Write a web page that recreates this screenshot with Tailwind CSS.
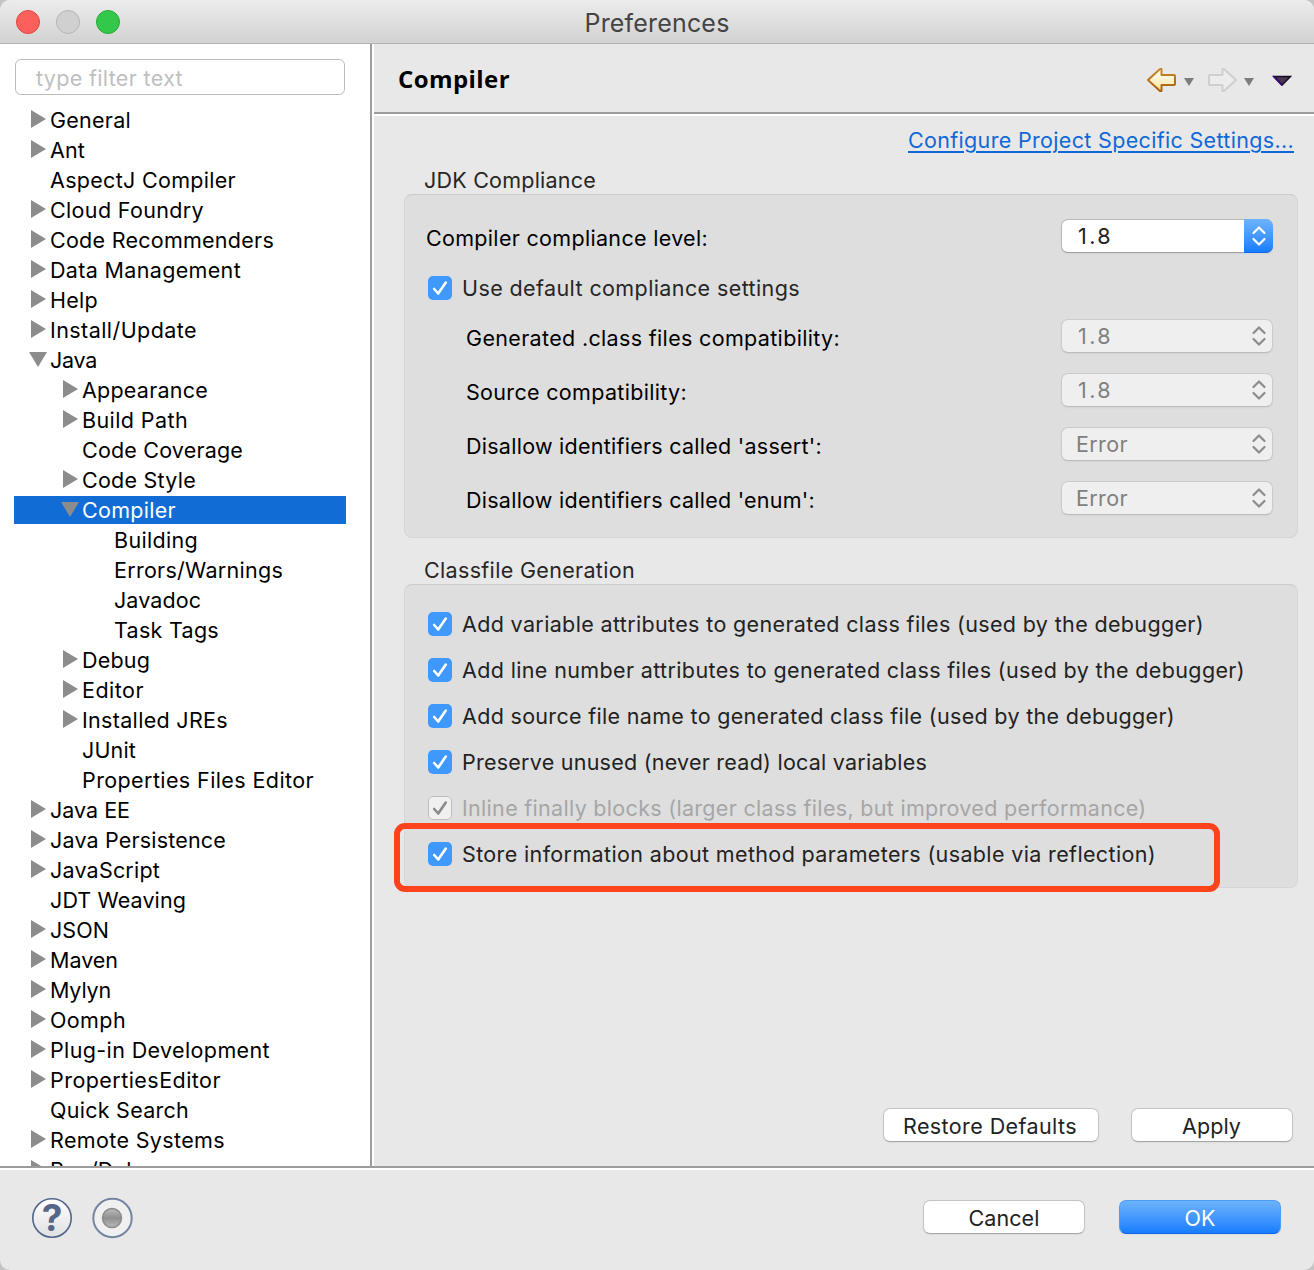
<!DOCTYPE html>
<html lang="en">
<head>
<meta charset="utf-8">
<title>Preferences</title>
<script src="https://cdn.jsdelivr.net/npm/@tailwindcss/browser@4"></script>
</head>
<body class="bg-[#c4c4c4]">
<div class="flex h-[1270px] w-[1314px] flex-col overflow-hidden rounded-[10px] bg-[#e8e8e8] font-['Inter',sans-serif] text-[21.5px] leading-[30px] whitespace-nowrap text-black">

  <!-- Title bar -->
  <header class="relative flex h-11 shrink-0 items-center justify-center border-b border-[#b1b1b1] bg-linear-to-b from-[#ececec] to-[#d2d2d2]">
    <div class="absolute top-[10px] left-4 flex gap-4">
      <span class="size-6 rounded-full border border-[#e2463f] bg-[#fc605c]"></span>
      <span class="size-6 rounded-full border border-[#b4b4b4] bg-[#d0d0d0]"></span>
      <span class="size-6 rounded-full border border-[#27aa35] bg-[#34c84a]"></span>
    </div>
    <h1 class="pt-[3px] text-[25px] text-[#444]"><span data-w="145" data-font="25px Inter">Preferences</span></h1>
  </header>

  <main class="flex h-[1122px] shrink-0">
    <!-- Category tree -->
    <nav class="flex w-[370px] shrink-0 flex-col overflow-hidden bg-white pt-[15px]">
      <div class="ml-[15px] flex h-9 w-[330px] shrink-0 items-center rounded-md border-[1.5px] border-[#bcbcbc] pt-0.5 pl-5 text-[#bfbfbf]"><span data-w="147">type filter text</span></div>
      <ul id="tree" class="mt-[11px] flex h-[1060px] shrink-0 flex-col gap-0.5 overflow-hidden"></ul>
    </nav>
    <div class="w-1 shrink-0 border-r-2 border-l-2 border-r-white border-l-[#9c9c9c]"></div>

    <section class="flex w-[940px] flex-col">
      <div class="flex h-[68px] shrink-0 items-center justify-between pt-1 pr-[22px] pl-6">
        <h2 class="pb-0.5 font-['Open_Sans','Noto_Sans',sans-serif] text-[24px] font-bold"><span data-w="112" data-font="bold 24px 'Open Sans'">Compiler</span></h2>
        <svg class="h-[26px] w-[146px]" viewBox="1146 67 146 26">
          <defs>
            <linearGradient id="gold" x1="0" y1="0" x2="0" y2="1"><stop offset="0" stop-color="#fff"/><stop offset="1" stop-color="#fde79a"/></linearGradient>
            <linearGradient id="edge" x1="0" y1="0" x2="0" y2="1"><stop offset="0" stop-color="#c48a2a"/><stop offset="1" stop-color="#a9600f"/></linearGradient>
          </defs>
          <path d="M1148 80 1160 69h1.500v6H1174q1 0 1 1v8q0 1-1 1h-12.500v6h-1.500z" fill="url(#gold)" stroke="url(#edge)" stroke-width="2" stroke-linejoin="round"/>
          <path d="M1184 78h10l-5 8z" fill="#7d7d7d"/>
          <path d="M1236 80 1224 69h-1.500v6H1210q-1 0-1 1v8q0 1 1 1h12.500v6h1.500z" fill="#ececec" stroke="#cfcfcf" stroke-width="2" stroke-linejoin="round"/>
          <path d="M1244 78h10l-5 8z" fill="#7d7d7d"/>
          <path d="M1274 76.500h16.500l-8.300 8.500z" fill="#4b3552" stroke="#150a22" stroke-width="1.500"/>
          <path d="M1273 76 1282 85.500" stroke="#3b0a8c" stroke-width="1.500"/>
        </svg>
      </div>
      <div class="h-1 shrink-0 border-t-2 border-b-2 border-t-[#9c9c9c] border-b-white"></div>

      <a class="mt-[9px] mr-5 self-end text-[#0f68d8] underline decoration-2 underline-offset-[3px]" href="#"><span data-w="386">Configure Project Specific Settings...</span></a>

      <h3 class="mt-[10px] ml-[50px] text-[#262626]"><span data-w="172">JDK Compliance</span></h3>
      <div class="mt-[-1px] ml-[30px] h-[344px] w-[894px] rounded-lg border border-[#d6d6d6] border-t-[#cbcbcb] bg-[#dedede] pt-6 pr-6 pl-[21px]">
        <div class="flex h-[34px] items-center justify-between">
          <label class="pt-1"><span data-w="282">Compiler compliance level:</span></label>
          <div class="flex h-[34px] w-[212px] items-center justify-between rounded-[7px] border border-[#b9b9b9] border-b-[#9f9f9f] bg-white pl-4 text-[#222] shadow-xs">
            <span data-w="35">1.8</span>
            <span class="-my-px -mr-px flex h-[34px] w-[29px] shrink-0 items-center justify-center rounded-r-[7px] border-b border-[#1566ee] bg-linear-to-b from-[#6cb3fa] to-[#147dff]">
              <svg class="h-[22px] w-4" viewBox="0 0 16 22" fill="none" stroke="#fff" stroke-width="2.200" stroke-linecap="round" stroke-linejoin="round"><path d="M2.500 8 8 2.500 13.500 8M2.500 14 8 19.500 13.500 14"/></svg>
            </span>
          </div>
        </div>
        <div class="mt-[23px] ml-0.5 flex h-6 items-center text-[#262626]"><i data-check="on"></i><span data-w="338">Use default compliance settings</span></div>
        <div class="mt-[19px] flex flex-col gap-5 pl-10">
          <div class="flex h-[34px] items-center justify-between"><label class="pt-1"><span data-w="374">Generated .class files compatibility:</span></label><b data-select="1.8"></b></div>
          <div class="flex h-[34px] items-center justify-between"><label class="pt-1"><span data-w="221">Source compatibility:</span></label><b data-select="1.8"></b></div>
          <div class="flex h-[34px] items-center justify-between"><label class="pt-1"><span data-w="356">Disallow identifiers called 'assert':</span></label><b data-select="Error"></b></div>
          <div class="flex h-[34px] items-center justify-between"><label class="pt-1"><span data-w="349">Disallow identifiers called 'enum':</span></label><b data-select="Error"></b></div>
        </div>
      </div>

      <h3 class="mt-[17px] ml-[50px] text-[#262626]"><span data-w="211">Classfile Generation</span></h3>
      <div class="relative mt-[-1px] ml-[30px] flex h-[304px] w-[894px] flex-col gap-[22px] rounded-lg border border-[#d6d6d6] border-t-[#cbcbcb] bg-[#dedede] pt-[27px] pl-[23px] text-[#222]">
        <div class="flex h-6 items-center"><i data-check="on"></i><span data-w="742">Add variable attributes to generated class files (used by the debugger)</span></div>
        <div class="flex h-6 items-center"><i data-check="on"></i><span data-w="783">Add line number attributes to generated class files (used by the debugger)</span></div>
        <div class="flex h-6 items-center"><i data-check="on"></i><span data-w="713">Add source file name to generated class file (used by the debugger)</span></div>
        <div class="flex h-6 items-center"><i data-check="on"></i><span data-w="465">Preserve unused (never read) local variables</span></div>
        <div class="flex h-6 items-center text-[#a6a6a6]"><i data-check="off"></i><span data-w="684.5">Inline finally blocks (larger class files, but improved performance)</span></div>
        <div class="flex h-6 items-center"><i data-check="on"></i><span data-w="694">Store information about method parameters (usable via reflection)</span></div>
        <div class="absolute top-[238px] left-[-11px] h-[69px] w-[826px] rounded-[11px] border-[6px] border-[#ff431c]"></div>
      </div>

      <div class="mt-auto mr-[21px] mb-6 flex justify-end gap-8 text-[#222]">
        <button class="flex h-[34px] w-[216px] items-center justify-center rounded-[7px] border border-[#c4c4c4] border-b-[#a6a6a6] bg-white pt-0.5 pr-0.5 shadow-xs"><span data-w="174">Restore Defaults</span></button>
        <button class="flex h-[34px] w-[162px] items-center justify-center rounded-[7px] border border-[#c4c4c4] border-b-[#a6a6a6] bg-white pt-0.5 pr-px shadow-xs"><span data-w="59">Apply</span></button>
      </div>
    </section>
  </main>

  <footer class="flex h-[104px] shrink-0 items-center justify-between border-t-2 border-[#9c9c9c] pr-[33px] pb-[4px] pl-8 shadow-[inset_0_2px_0_white]">
    <div class="mt-0.5 flex items-center gap-5">
      <svg class="size-10" viewBox="0 0 40 40">
        <defs><linearGradient id="disc" x1="0" y1="0" x2="0" y2="1"><stop offset="0" stop-color="#fff"/><stop offset="1" stop-color="#e0e0e0"/></linearGradient></defs>
        <circle cx="20" cy="20" r="19.200" fill="url(#disc)" stroke="#52658a" stroke-width="1.600"/>
        <text x="20" y="33" text-anchor="middle" font-family="Inter" font-weight="700" font-size="37" fill="#566888">?</text>
      </svg>
      <svg class="size-[42px]" viewBox="0 0 42 42">
        <defs><linearGradient id="dot" x1="0" y1="0" x2="0" y2="1"><stop offset="0" stop-color="#bdbdbd"/><stop offset=".5" stop-color="#8f8f8f"/><stop offset="1" stop-color="#bababa"/></linearGradient></defs>
        <circle cx="20.500" cy="21" r="19.200" fill="#f0f0f0" stroke="#7485a3" stroke-width="2"/>
        <circle cx="20" cy="21" r="9.500" fill="url(#dot)" stroke="#8b8b8b" stroke-width="1.500"/>
      </svg>
    </div>
    <div class="flex gap-[34px]">
      <button class="flex h-[34px] w-[162px] items-center justify-center rounded-[7px] border border-[#c4c4c4] border-b-[#a6a6a6] bg-white pt-0.5 text-[#222] shadow-xs"><span data-w="71">Cancel</span></button>
      <button class="flex h-[34px] w-[162px] items-center justify-center rounded-[7px] border border-[#4c9df5] border-b-[#1566ee] bg-linear-to-b from-[#6cb3fa] to-[#147dff] pt-0.5 text-white shadow-xs"><span data-w="31">OK</span></button>
    </div>
  </footer>
</div>

<script>
// [level, state (">" closed, "v" open, "" leaf), label, label width]
const rows = [
  [0,">","General",81],[0,">","Ant",35],[0,"","AspectJ Compiler",186],[0,">","Cloud Foundry",154],
  [0,">","Code Recommenders",224],[0,">","Data Management",191],[0,">","Help",48],[0,">","Install/Update",147],
  [0,"v","Java",47],[1,">","Appearance",126],[1,">","Build Path",106],[1,"","Code Coverage",161],
  [1,">","Code Style",114],[1,"v","Compiler",94],[2,"","Building",84],[2,"","Errors/Warnings",169],
  [2,"","Javadoc",87],[2,"","Task Tags",105],[1,">","Debug",68],[1,">","Editor",62],
  [1,">","Installed JREs",146],[1,"","JUnit",54],[1,"","Properties Files Editor",232],[0,">","Java EE",80],
  [0,">","Java Persistence",176],[0,">","JavaScript",110],[0,"","JDT Weaving",136],[0,">","JSON",59],
  [0,">","Maven",68],[0,">","Mylyn",61],[0,">","Oomph",76],[0,">","Plug-in Development",220],
  [0,">","PropertiesEditor",171],[0,"","Quick Search",139],[0,">","Remote Systems",175],[0,">","Run/Debug",116]
];
const arrows = {
  ">": '<path d="M3 1v18l15-9z"/>',
  "v": '<path d="M1 3h18L10 18z"/>',
  "": ''
};
const indent = ["pl-[14px]", "pl-[46px]", "pl-[78px]"];
document.getElementById("tree").innerHTML = rows.map(([level, state, label, w]) => {
  const selected = state === "v" && label === "Compiler";
  return `<li class="ml-[14px] flex h-7 w-[332px] shrink-0 items-center ${indent[level]} ${selected ? "bg-[#116cd6] text-white" : ""}">
    <svg class="mb-0.5 mr-[2px] size-5 shrink-0" viewBox="0 0 20 20" fill="#8c8c8c">${arrows[state]}</svg><span data-w="${w}">${label}</span></li>`;
}).join("");

document.querySelectorAll("[data-check]").forEach(el => {
  const on = el.dataset.check === "on";
  el.className = "mr-[10px] flex size-6 shrink-0 items-center justify-center rounded-[5px] " + (on ? "bg-[#3f98fb]" : "border border-[#bdbdbd] bg-[#f0f0f0]");
  el.innerHTML = `<svg class="size-6 shrink-0" viewBox="0 0 24 24" fill="none" stroke="${on ? "#fff" : "#8a8a8a"}" stroke-width="2.600" stroke-linecap="round" stroke-linejoin="round"><path d="M6.200 13 10.200 17.500 17.800 6.500"/></svg>`;
});

document.querySelectorAll("[data-select]").forEach(el => {
  const number = el.dataset.select === "1.8";
  el.className = "flex h-[34px] w-[212px] items-center justify-between rounded-[7px] border border-[#cbcbcb] border-b-[#bcbcbc] bg-[#efefef] pr-[5.5px] font-normal text-[#808080] shadow-xs " + (number ? "pl-4" : "pl-[14px]");
  el.innerHTML = `<span data-w="${number ? 35 : 52}">${el.dataset.select}</span><svg class="h-[22px] w-4" viewBox="0 0 16 22" fill="none" stroke="#8c8c8c" stroke-width="2.200" stroke-linecap="round" stroke-linejoin="round"><path d="M2.500 8 8 2.500 13.500 8M2.500 14 8 19.500 13.500 14"/></svg>`;
});

// Track each label out to its set width.
const pen = document.createElement("canvas").getContext("2d");
document.querySelectorAll("[data-w]").forEach(el => {
  pen.font = el.dataset.font || "21.5px Inter";
  const natural = pen.measureText(el.textContent).width;
  el.style.letterSpacing = ((el.dataset.w - natural) / el.textContent.length) + "px";
});
</script>
</body>
</html>
